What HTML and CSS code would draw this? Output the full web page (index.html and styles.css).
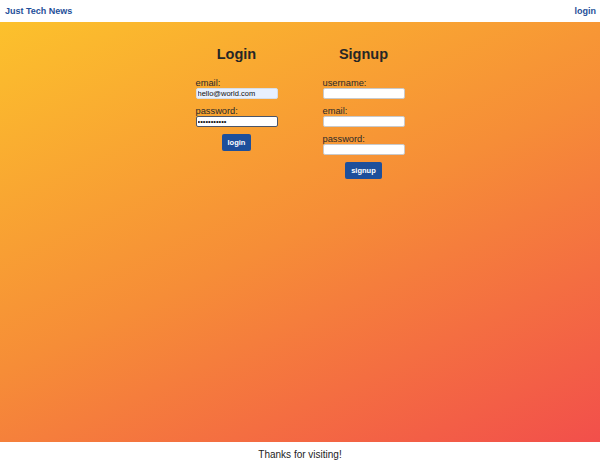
FILE: index.html
```html
<!DOCTYPE html>
<html lang="en">
<head>
<meta charset="utf-8">
<title>Just Tech News</title>
<link rel="stylesheet" href="styles.css">
</head>
<body>
<header class="topbar">
  <a class="brand" href="#">Just Tech News</a>
  <a class="nav-link" href="#">login</a>
</header>
<main class="hero">
  <div class="forms">
    <form class="form-col">
      <h2 class="form-title">Login</h2>
      <div class="field">
        <label class="field-label" for="login-email">email:</label>
        <input class="field-input autofill" id="login-email" type="text" value="hello@world.com">
      </div>
      <div class="field">
        <label class="field-label" for="login-pass">password:</label>
        <input class="field-input focused" id="login-pass" type="password" value="password123">
      </div>
      <div class="actions">
        <button class="btn" type="button">login</button>
      </div>
    </form>
    <form class="form-col">
      <h2 class="form-title">Signup</h2>
      <div class="field">
        <label class="field-label" for="su-user">username:</label>
        <input class="field-input" id="su-user" type="text">
      </div>
      <div class="field">
        <label class="field-label" for="su-email">email:</label>
        <input class="field-input" id="su-email" type="text">
      </div>
      <div class="field">
        <label class="field-label" for="su-pass">password:</label>
        <input class="field-input" id="su-pass" type="password">
      </div>
      <div class="actions">
        <button class="btn" type="button">signup</button>
      </div>
    </form>
  </div>
</main>
<footer class="footer">Thanks for visiting!</footer>
</body>
</html>
```
FILE: styles.css
```css
* { box-sizing: border-box; }
html, body {
  margin: 0;
  padding: 0;
}
body {
  font-family: "Liberation Sans", Arial, sans-serif;
  color: #222;
  background: #fff;
}
.topbar {
  height: 22px;
  display: flex;
  justify-content: space-between;
  align-items: center;
  padding: 0 4px 0 5px;
  background: #fff;
}
.brand, .nav-link {
  font-size: 9px;
  line-height: 22px;
  font-weight: bold;
  color: #1f4f99;
  text-decoration: none;
}
.hero {
  height: 420px;
  background: linear-gradient(155deg, #fcc12c 0%, #f68d37 50%, #f24f4b 100%);
  padding-top: 24px;
}
.forms {
  display: flex;
  justify-content: center;
  gap: 45px;
}
.form-col {
  width: 82px;
  margin: 0;
}
.form-title {
  margin: 0 -10px 16px;
  font-size: 14.5px;
  line-height: 16px;
  font-weight: bold;
  text-align: center;
  color: #262626;
  white-space: nowrap;
}
.field {
  margin-bottom: 7px;
}
.field-label {
  display: block;
  font-size: 9.3px;
  line-height: 10px;
  color: #2a2a2a;
}
.field-input {
  display: block;
  width: 82px;
  height: 11px;
  margin: 0;
  padding: 0 1px;
  border: 1px solid #c9c9c9;
  border-radius: 2px;
  background: #fff;
  font-family: "Liberation Sans", Arial, sans-serif;
  font-size: 7.5px;
  color: #111;
  outline: none;
}
.field-input.autofill {
  background: #e8f0fe;
  border-color: #d6dde8;
}
.field-input.focused {
  border-color: #4b5568;
}
.actions {
  display: flex;
  justify-content: center;
}
.btn {
  height: 17px;
  padding: 0 6px;
  border: none;
  border-radius: 2px;
  background: #1d4f9b;
  color: #fff;
  font-family: "Liberation Sans", Arial, sans-serif;
  font-size: 7.5px;
  font-weight: bold;
  cursor: pointer;
}
.footer {
  height: 23px;
  padding-top: 2px;
  line-height: 21px;
  text-align: center;
  font-size: 10px;
  color: #222;
  background: #fff;
}
```
